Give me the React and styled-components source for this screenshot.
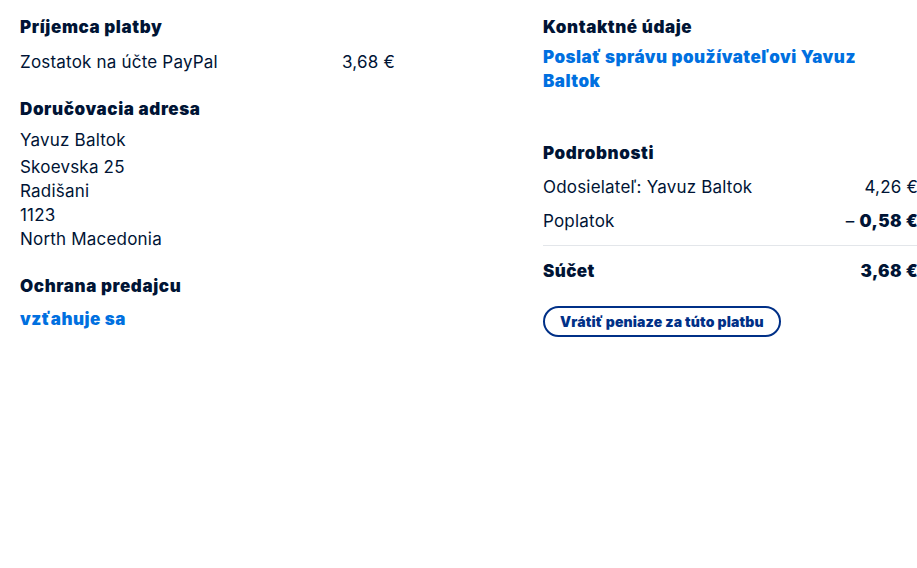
import React from "react";
import styled, { createGlobalStyle } from "styled-components";

const Global = createGlobalStyle`
  html, body { margin: 0; padding: 0; background: #fff; overflow: hidden; }
  body { font-family: Inter, "Noto Sans", "Liberation Sans", sans-serif; color: #001435; }
`;

const Page = styled.div`
  display: grid;
  grid-template-columns: 375px 375px;
  column-gap: 148px;
  padding: 15px 0 0 20px;
  width: 1000px;
  align-items: start;
`;

const Column = styled.div`
  display: flex;
  flex-direction: column;
`;

const Heading = styled.h3`
  margin: ${(p) => p.$mt || 0}px 0 ${(p) => p.$mb || 0}px;
  font-size: 17px;
  line-height: 24px;
  font-weight: 900;
  letter-spacing: 0.6px;
  color: #001435;
`;

const Row = styled.div`
  display: flex;
  justify-content: space-between;
  align-items: baseline;
  font-size: 17px;
  line-height: 24px;
  letter-spacing: 0.2px;
  margin-bottom: ${(p) => p.$mb || 0}px;
`;

const Amount = styled.span`
  font-weight: ${(p) => (p.$bold ? 900 : 400)};
  letter-spacing: ${(p) => (p.$bold ? 0.4 : 0.2)}px;
`;

const Minus = styled.span`
  font-weight: 400;
  margin-right: 5px;
`;

const Address = styled.div`
  display: flex;
  flex-direction: column;
  font-size: 17px;
  line-height: 24px;
  letter-spacing: 0.2px;
`;

const NameLine = styled.span`
  margin-bottom: 3px;
`;

const Link = styled.a`
  display: block;
  margin-top: ${(p) => p.$mt || 0}px;
  font-size: 17px;
  line-height: 24px;
  font-weight: 900;
  letter-spacing: 0.5px;
  color: #0070e0;
  text-decoration: none;
  max-width: ${(p) => p.$maxw || "none"};
`;

const Divider = styled.hr`
  border: 0;
  border-top: 1px solid #e3e6ea;
  margin: 12px 0 13px;
`;

const TotalLabel = styled.span`
  font-weight: 900;
  letter-spacing: 0.4px;
`;

const OutlineButton = styled.button`
  align-self: flex-start;
  margin-top: 23px;
  height: 31px;
  padding: 0 15px;
  border: 2px solid #003087;
  border-radius: 999px;
  background: #fff;
  color: #003087;
  font-family: Inter, "Noto Sans", sans-serif;
  font-size: 14px;
  font-weight: 900;
  letter-spacing: 0.15px;
  cursor: pointer;
`;

export default function App() {
  return (
    <>
      <Global />
      <Page>
        <Column>
          <Heading $mb={11}>Príjemca platby</Heading>
          <Row>
            <span>Zostatok na účte PayPal</span>
            <span>3,68 €</span>
          </Row>
          <Heading $mt={23} $mb={7}>Doručovacia adresa</Heading>
          <Address>
            <NameLine>Yavuz Baltok</NameLine>
            <span>Skoevska 25</span>
            <span>Radišani</span>
            <span>1123</span>
            <span>North Macedonia</span>
          </Address>
          <Heading $mt={23}>Ochrana predajcu</Heading>
          <Link href="#" $mt={9}>vzťahuje sa</Link>
        </Column>
        <Column>
          <Heading>Kontaktné údaje</Heading>
          <Link href="#" $mt={6} $maxw="330px">
            Poslať správu používateľovi Yavuz Baltok
          </Link>
          <Heading $mt={48} $mb={10}>Podrobnosti</Heading>
          <Row $mb={10}>
            <span>Odosielateľ: Yavuz Baltok</span>
            <span>4,26 €</span>
          </Row>
          <Row>
            <span>Poplatok</span>
            <span>
              <Minus>–</Minus>
              <Amount $bold>0,58 €</Amount>
            </span>
          </Row>
          <Divider />
          <Row>
            <TotalLabel>Súčet</TotalLabel>
            <Amount $bold>3,68 €</Amount>
          </Row>
          <OutlineButton>Vrátiť peniaze za túto platbu</OutlineButton>
        </Column>
      </Page>
    </>
  );
}
